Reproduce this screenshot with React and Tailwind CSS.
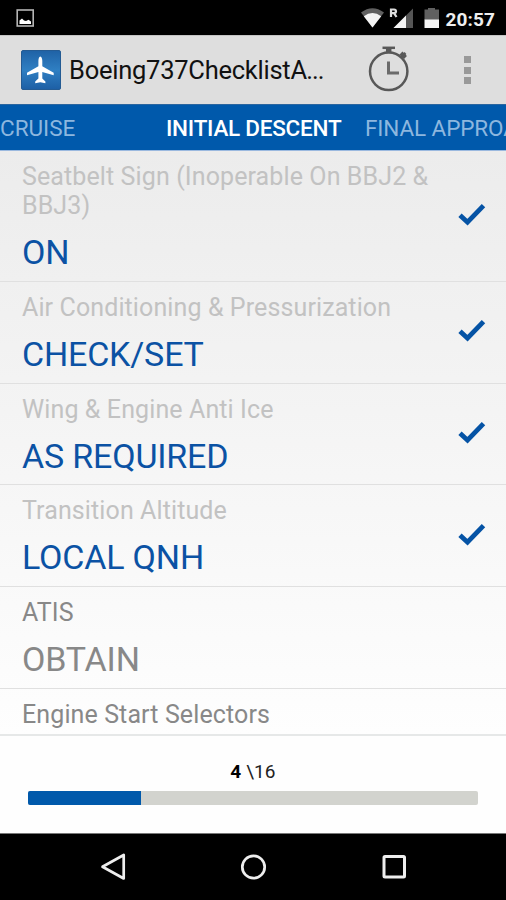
const items = [
    { label: "Seatbelt Sign (Inoperable On BBJ2 & BBJ3)", value: "ON", done: true },
    { label: "Air Conditioning & Pressurization", value: "CHECK/SET", done: true },
    { label: "Wing & Engine Anti Ice", value: "AS REQUIRED", done: true },
    { label: "Transition Altitude", value: "LOCAL QNH", done: true },
    { label: "ATIS", value: "OBTAIN", done: false },
    { label: "Engine Start Selectors", done: false },
];

const total = 16;

function StatusBar() {
    return (
        <div className="flex h-[35px] shrink-0 items-center bg-black pr-[11px] pl-4">
            <svg className="mt-px h-[18px] w-[18px]" viewBox="0 0 18 18">
                <rect x="1.200" y="1" width="16" height="16" fill="none" stroke="#b5b5b5" strokeWidth="1.600" />
                <path d="M3.500 15V11.500L6 9.500L8 11.500L10 12L12.500 10.800L15 12.500V15Z" fill="#fff" />
            </svg>
            <svg className="ml-auto h-[22px] w-[86px]" viewBox="0 0 86 22">
                <path d="M1 5.500Q12.500 -3 24 5.500L12.500 20.500Z" fill="#606060" />
                <path d="M3.800 9.200Q12.500 3 21.200 9.200L12.500 20.500Z" fill="#f4f4f4" />
                <path d="M53 1.500V21H33.500Z" fill="#555" />
                <path d="M46 8.500V21H33.500Z" fill="#f4f4f4" />
                <path d="M31 10V2.500H34Q36 2.500 36 4.300T34 6.200H31M34 6.200L36.500 10" fill="none" stroke="#ddd" strokeWidth="2.200" />
                <path d="M64.500 2.500H68V1H75V2.500H79V13H64.500Z" fill="#606060" />
                <rect x="64.500" y="12.500" width="14.500" height="8.500" fill="#f4f4f4" />
            </svg>
            <span className="mt-[3px] text-[19px] leading-none font-bold tracking-[0.1px] text-[#eee]">20:57</span>
        </div>
    );
}

function AppBar() {
    return (
        <div className="flex h-[69px] shrink-0 items-center border-t border-[#c4c4c4] bg-[#dedede] pl-[21px]">
            <svg className="h-10 w-10" viewBox="0 0 40 40">
                <defs>
                    <linearGradient id="tile" x1="0" y1="0" x2="0" y2="1">
                        <stop offset="0" stopColor="#1f62a6" />
                        <stop offset="0.5" stopColor="#2f7fc2" />
                        <stop offset="1" stopColor="#1d5fa5" />
                    </linearGradient>
                </defs>
                <rect x="0.500" y="0.500" width="39" height="39" rx="1.500" fill="url(#tile)" stroke="#245b93" />
                <path
                    d="M19.300 6.500C18 6.500 17.400 9 17.400 11V16.200L6 22.800V25.300L17.400 22V28.500L14.200 31.500V33.200L19.300 32.200L24.400 33.200V31.500L21.300 28.500V22L32.700 25.300V22.800L21.300 16.200V11C21.300 9 20.600 6.500 19.300 6.500Z"
                    fill="#fff"
                />
            </svg>
            <h1 className="mt-[2px] ml-2 text-[25.500px] leading-none tracking-[-0.250px] whitespace-nowrap text-[#111]">
                Boeing737Checklist<span className="tracking-[-0.900px]">A...</span>
            </h1>
            <svg className="absolute top-[45px] left-[367px] h-12 w-[43px]" viewBox="0 0 43 48" fill="none" stroke="#585858">
                <circle cx="21.700" cy="26.300" r="18.700" strokeWidth="2.500" />
                <path d="M15.500 2.800H28" strokeWidth="2.500" />
                <path d="M21.700 3V8" strokeWidth="5.500" />
                <path d="M34 12.500L38.500 8" strokeWidth="2.500" />
                <path d="M34 8L38.500 12.500" strokeWidth="4" />
                <path d="M21.500 16.500V28H32" stroke="#6b6b6b" strokeWidth="3" />
            </svg>
            <div className="mr-[35px] ml-auto flex flex-col gap-[3.500px]">
                <i className="h-[7px] w-[7px] bg-[#999]" />
                <i className="h-[7px] w-[7px] bg-[#999]" />
                <i className="h-[7px] w-[7px] bg-[#999]" />
            </div>
        </div>
    );
}

function Tabs() {
    return (
        <div className="flex h-[47px] shrink-0 items-center overflow-hidden border-t border-b border-t-[#2a659f] border-b-[#9bb9df] bg-[#0059ab] pt-[2px] text-[22.500px] leading-none whitespace-nowrap text-[#8db7df]">
            <span className="w-[166px] shrink-0">CRUISE</span>
            <span className="w-[199px] shrink-0 font-medium tracking-[-0.250px] text-white">INITIAL DESCENT</span>
            <span className="shrink-0 tracking-[-0.100px]">FINAL APPROACH</span>
        </div>
    );
}

function Item({ label, value, done }) {
    return (
        <li className="flex shrink-0 items-center border-b border-[#e0e0e0] pr-[20px] pb-[8.800px] pl-[22px]">
            <div className="w-[422px] pt-[11px]">
                <p className={`text-[25px] leading-[29px] tracking-[0.110px] ${done ? "text-[#c2c2c2]" : "text-[#888]"}`}>{label}</p>
                {value && (
                    <p className={`mt-3 text-[34px] leading-[40px] tracking-[-0.180px] ${done ? "text-[#0b52a4]" : "text-[#888]"}`}>
                        {value}
                    </p>
                )}
            </div>
            {done && (
                <svg className="mt-[5px] ml-auto h-[24px] w-[28px]" viewBox="0 0 28 24">
                    <path d="M2 13.200L9.500 20.200L25.500 3.700" fill="none" stroke="#0553a5" strokeWidth="4.800" />
                </svg>
            )}
        </li>
    );
}

function Progress() {
    const done = items.filter((item) => item.done).length;

    return (
        <div className="h-[99px] shrink-0 border-t-2 border-[#e6e8e8] bg-[#fefefe] px-7 pt-[25px]">
            <p className="text-center text-[19px] leading-[22px] tracking-[0.100px] text-[#222]">
                <b className="text-black">{done}</b> \{total}
            </p>
            <div className="mt-[8px] h-[13.500px] overflow-hidden rounded-[2px] bg-[#d2d3ce]">
                <div className="h-full bg-[#0059ab]" style={{ width: `${(done / total) * 100}%` }} />
            </div>
        </div>
    );
}

function NavBar() {
    return (
        <div className="flex h-[67px] shrink-0 items-center justify-between border-t border-[#777] bg-black pr-[98px] pl-[100px]">
            <svg className="h-7 w-7" viewBox="0 0 28 28" fill="none" stroke="#eee" strokeWidth="2.700" strokeLinejoin="round">
                <path d="M23.700 2V25.500L2.500 13.800Z" />
            </svg>
            <svg className="h-7 w-7" viewBox="0 0 28 28" fill="none" stroke="#eee" strokeWidth="2.700">
                <circle cx="13.500" cy="14" r="11.200" />
            </svg>
            <svg className="h-7 w-7" viewBox="0 0 28 28" fill="none" stroke="#eee" strokeWidth="3">
                <rect x="4" y="3.500" width="20.500" height="20.500" rx="1" />
            </svg>
        </div>
    );
}

export default function App() {
    return (
        <div className="relative flex h-[900px] w-[506px] flex-col overflow-hidden font-['Roboto',sans-serif]">
            <StatusBar />
            <AppBar />
            <Tabs />
            <ul className="flex h-[583px] shrink-0 flex-col overflow-hidden bg-linear-to-b from-[#ececec] to-[#fefefe]">
                {items.map((item) => (
                    <Item key={item.label} {...item} />
                ))}
            </ul>
            <Progress />
            <NavBar />
        </div>
    );
}
